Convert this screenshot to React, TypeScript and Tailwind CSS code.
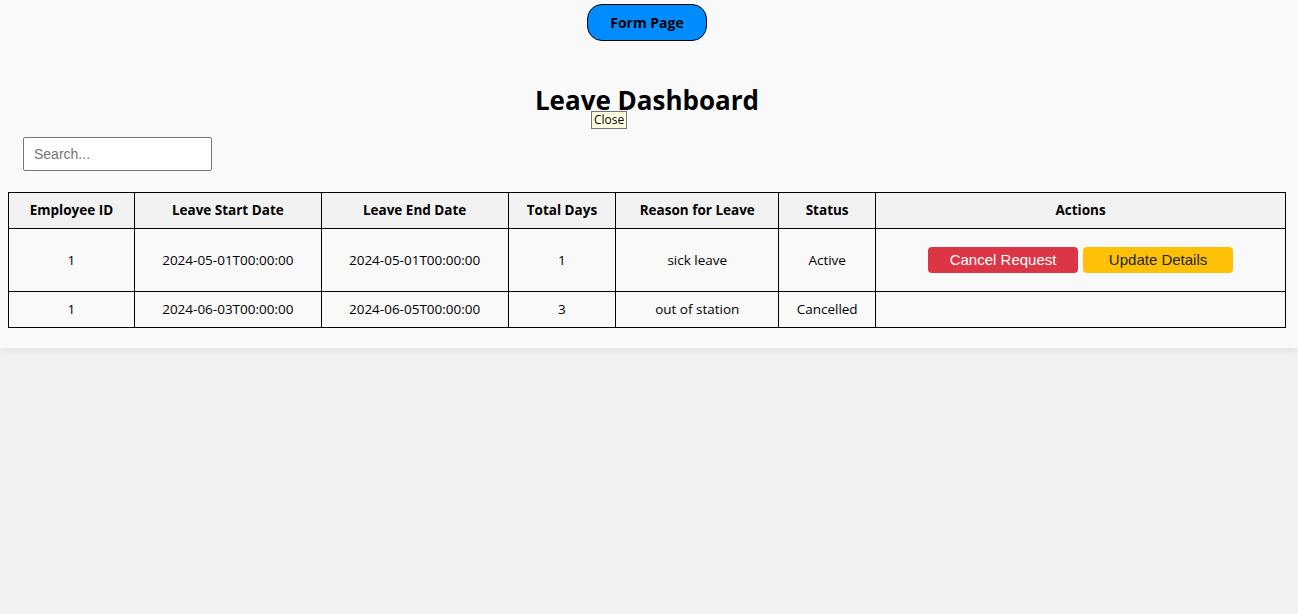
import React from "react";

type Leave = {
  employeeId: number;
  start: string;
  end: string;
  days: number;
  reason: string;
  status: string;
};

const leaves: Leave[] = [
  {
    employeeId: 1,
    start: "2024-05-01T00:00:00",
    end: "2024-05-01T00:00:00",
    days: 1,
    reason: "sick leave",
    status: "Active",
  },
  {
    employeeId: 1,
    start: "2024-06-03T00:00:00",
    end: "2024-06-05T00:00:00",
    days: 3,
    reason: "out of station",
    status: "Cancelled",
  },
];

const headers = [
  { label: "Employee ID", w: "w-[126px]" },
  { label: "Leave Start Date", w: "w-[187px]" },
  { label: "Leave End Date", w: "w-[187px]" },
  { label: "Total Days", w: "w-[108px]" },
  { label: "Reason for Leave", w: "w-[163px]" },
  { label: "Status", w: "w-[97px]" },
  { label: "Actions", w: "w-[410px]" },
];

const App = () => {
  return (
    <div className="min-h-screen bg-[#f2f2f2] font-['Open_Sans',sans-serif] text-black">
      <div className="bg-[#f9f9f9] pt-[4px] pb-[20px] shadow-[0_2px_8px_rgba(0,0,0,0.08)]">
        <div className="flex justify-center pr-[4px]">
          <button className="h-[37px] w-[120px] rounded-[15px] border border-black bg-[#008cff] text-[14px] font-bold">
            Form Page
          </button>
        </div>

        <div className="relative mt-[40px] pr-[4px]">
          <h1 className="text-center text-[26px] font-bold leading-[38px]">
            Leave Dashboard
          </h1>
          {/* "Close" tooltip hovering over the heading */}
          <div className="absolute left-[591px] top-[30px] border border-[#767676] bg-[#ffffe1] px-[2px] text-[12px] leading-[16px]">
            Close
          </div>
        </div>

        <div className="mt-[18px] pl-[23px]">
          <input
            type="text"
            placeholder="Search..."
            className="h-[34px] w-[189px] rounded-[2px] border border-[#767676] bg-white px-[10px] text-[14px] font-['Liberation_Sans',sans-serif] placeholder:text-[#757575] outline-none"
          />
        </div>

        <table className="ml-[8px] mt-[21px] w-[1278px] border-collapse text-center text-[13.5px]">
          <thead>
            <tr className="h-[36px] bg-[#f2f2f2]">
              {headers.map((h) => (
                <th key={h.label} className={`${h.w} border border-black px-[8px] font-bold`}>
                  {h.label}
                </th>
              ))}
            </tr>
          </thead>
          <tbody>
            {leaves.map((l, i) => (
              <tr key={i} className={l.status === "Active" ? "h-[63px]" : "h-[36px]"}>
                <td className="border border-black px-[8px]">{l.employeeId}</td>
                <td className="border border-black px-[8px]">{l.start}</td>
                <td className="border border-black px-[8px]">{l.end}</td>
                <td className="border border-black px-[8px]">{l.days}</td>
                <td className="border border-black px-[8px]">{l.reason}</td>
                <td className="border border-black px-[8px]">{l.status}</td>
                <td className="border border-black px-[8px]">
                  {l.status === "Active" && (
                    <div className="flex justify-center gap-[5px] font-['Liberation_Sans',sans-serif] text-[15px]">
                      <button className="h-[26px] w-[150px] rounded-[4px] bg-[#dc3545] text-white">
                        Cancel Request
                      </button>
                      <button className="h-[26px] w-[150px] rounded-[4px] bg-[#ffc107] text-[#212529]">
                        Update Details
                      </button>
                    </div>
                  )}
                </td>
              </tr>
            ))}
          </tbody>
        </table>
      </div>
    </div>
  );
};

export default App;
